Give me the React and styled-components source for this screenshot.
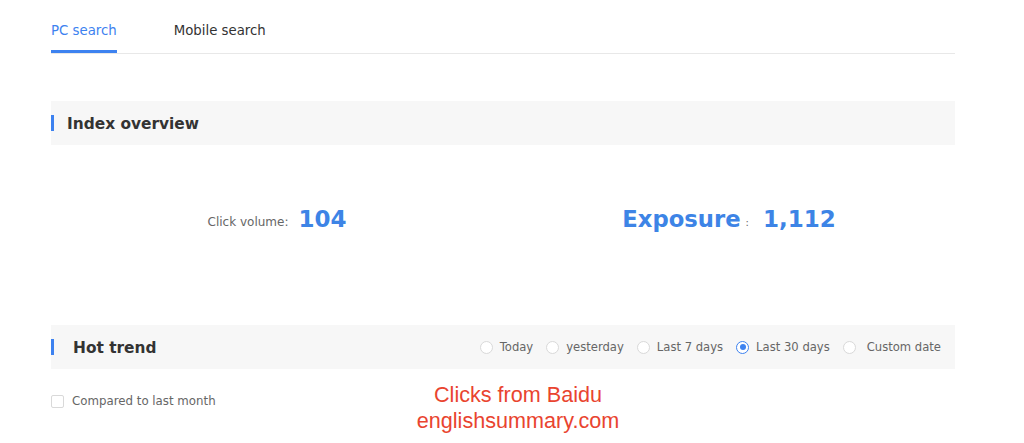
import React, { useState } from 'react'
import styled, { createGlobalStyle } from 'styled-components'

const GlobalStyle = createGlobalStyle`
    body {
        margin: 0;
        background: #fff;
        font-family: "DejaVu Sans", Verdana, sans-serif;
    }
`

const ranges = ['Today', 'yesterday', 'Last 7 days', 'Last 30 days', 'Custom date']

function App() {
    const [tab, setTab] = useState('pc')
    const [range, setRange] = useState('Last 30 days')
    const [compare, setCompare] = useState(false)

    return (
        <Page>
            <GlobalStyle />
            {/* tabs */}
            <Tabs>
                <Tab active={tab === 'pc'} onClick={() => setTab('pc')}>PC search</Tab>
                <Tab active={tab === 'mobile'} onClick={() => setTab('mobile')}>Mobile search</Tab>
            </Tabs>

            <SectionHead top={47}>
                <HeadTitle indent={16}>Index overview</HeadTitle>
            </SectionHead>

            <Stats>
                <StatHalf>
                    <SmallLabel>Click volume:</SmallLabel>
                    <Value>104</Value>
                </StatHalf>
                <StatHalf>
                    <BigLabel>Exposure</BigLabel>
                    <Colon>:</Colon>
                    <Value>1,112</Value>
                </StatHalf>
            </Stats>

            <SectionHead top={0}>
                <HeadTitle indent={22}>Hot trend</HeadTitle>
                <Radios>
                    {ranges.map((r) => (
                        <RadioItem key={r} wide={r === 'Custom date'} onClick={() => setRange(r)}>
                            <Circle checked={range === r} />
                            <span>{r}</span>
                        </RadioItem>
                    ))}
                </Radios>
            </SectionHead>

            <Bottom>
                <CheckRow onClick={() => setCompare(!compare)}>
                    <Box checked={compare} />
                    <span>Compared to last month</span>
                </CheckRow>
                <Watermark>
                    Clicks from Baidu<br />englishsummary.com
                </Watermark>
            </Bottom>
        </Page>
    )
}

const Page = styled.div`
    width: 904px;
    margin-left: 51px;
    padding-top: 21px;
`

const Tabs = styled.div`
    display: flex;
    gap: 57px;
    border-bottom: 1px solid #e8e8e8;
    height: 32px;
`

const Tab = styled.div`
    font-size: 13.3px;
    line-height: 20px;
    color: ${(p) => (p.active ? '#3d82f0' : '#333')};
    border-bottom: 3px solid ${(p) => (p.active ? '#3d82f0' : 'transparent')};
    height: 32px;
    box-sizing: border-box;
    cursor: pointer;
`

const SectionHead = styled.div`
    margin-top: ${(p) => p.top}px;
    height: 44px;
    background: #f7f7f7;
    display: flex;
    align-items: center;
    justify-content: space-between;
    position: relative;

    &::before {
        content: '';
        position: absolute;
        left: 0;
        top: 14px;
        width: 3px;
        height: 16px;
        background: #3d82f0;
    }
`

const HeadTitle = styled.h2`
    margin: 1px 0 0 ${(p) => p.indent}px;
    font-size: 15.4px;
    font-weight: bold;
    color: #333;
`

const Stats = styled.div`
    display: flex;
    height: 180px;
    padding-bottom: 32px;
    box-sizing: border-box;
`

const StatHalf = styled.div`
    flex: 1;
    display: flex;
    align-items: center;
    justify-content: center;
`

const SmallLabel = styled.span`
    font-size: 12px;
    color: #666;
    margin-right: 10px;
    margin-top: 6px;
`

const BigLabel = styled.span`
    font-size: 22.7px;
    font-weight: bold;
    color: #3d84e6;
`

const Colon = styled.span`
    font-size: 10px;
    color: #666;
    margin: 6px 14px 0 5px;
`

const Value = styled.span`
    font-size: 23px;
    font-weight: bold;
    color: #3d84e6;
`

const Radios = styled.div`
    display: flex;
    align-items: center;
    gap: 13px;
    margin-right: 14px;
`

const RadioItem = styled.label`
    display: flex;
    align-items: center;
    gap: ${(p) => (p.wide ? 11 : 7)}px;
    font-size: 11.6px;
    color: #666;
    cursor: pointer;
`

const Circle = styled.span`
    box-sizing: border-box;
    width: 13px;
    height: 13px;
    border-radius: 50%;
    border: 1px solid ${(p) => (p.checked ? '#3d82f0' : '#d9d9d9')};
    background: #fff;
    position: relative;

    &::after {
        content: '';
        display: ${(p) => (p.checked ? 'block' : 'none')};
        position: absolute;
        left: 2.5px;
        top: 2.5px;
        width: 6px;
        height: 6px;
        border-radius: 50%;
        background: #3d82f0;
    }
`

const Bottom = styled.div`
    display: flex;
    align-items: flex-start;
    padding-top: 13px;
`

const CheckRow = styled.label`
    display: flex;
    align-items: center;
    gap: 8px;
    font-size: 11.8px;
    color: #666;
    margin-top: 12px;
    width: 362px;
    cursor: pointer;
`

const Box = styled.span`
    box-sizing: border-box;
    width: 13px;
    height: 13px;
    border: 1px solid #d9d9d9;
    border-radius: 2px;
    background: ${(p) => (p.checked ? '#3d82f0' : '#fff')};
`

const Watermark = styled.div`
    width: 210px;
    text-align: center;
    font-family: "Liberation Sans", Arial, sans-serif;
    font-size: 21.6px;
    line-height: 26px;
    color: #e9442f;
`

export default App
